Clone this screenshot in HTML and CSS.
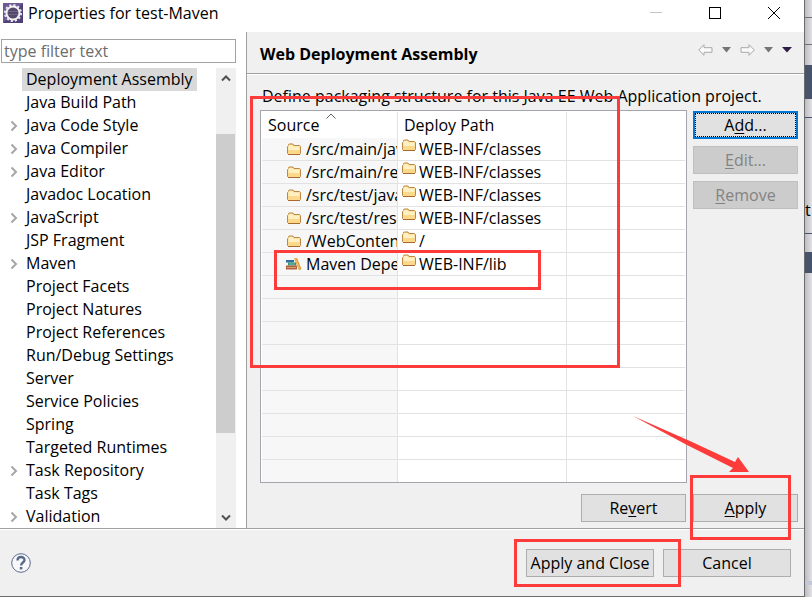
FILE: index.html
```html
<!DOCTYPE html>
<html lang="en">
<head>
    <meta charset="UTF-8">
    <meta name="viewport" content="width=device-width, initial-scale=1.0">
    <title>Properties for test-Maven</title>
    <link rel="stylesheet" href="styles.css">
</head>
<body>
    <!-- Shared icons -->
    <svg class="symbols" aria-hidden="true">
        <symbol id="folder" viewBox="0 0 14 13">
            <path d="M1.500 2.500v-1l.5-.5h4l1 1.500h5.500l1 1v7l-1 1h-11l-1-1v-7z" fill="#fbd88a" stroke="#bd8744"/>
            <path d="M2 2h3.500l1 1.500H12.500V7H1.500V3z" fill="#fff0c4"/>
            <path d="M1 11.500h12" stroke="#a86a2e"/>
        </symbol>
        <symbol id="chevron" viewBox="0 0 8 12">
            <path d="M1.500 1.500 6 6l-4.500 4.500" fill="none" stroke="#a6a6a6" stroke-width="2"/>
        </symbol>
    </svg>

    <div class="desktop">
        <main class="dialog">
            <header class="title-bar">
                <svg class="app-icon" width="20" height="20" viewBox="0 0 20 20">
                    <rect width="20" height="20" fill="#4f4079"/>
                    <path d="M0 0h20L0 20z" fill="#6b5a94"/>
                    <circle cx="10" cy="10" r="8" fill="none" stroke="#e8e6ec" stroke-width="2" stroke-dasharray="2.200 2"/>
                    <circle cx="10" cy="10" r="6.500" fill="#54496b" stroke="#f2f1f4" stroke-width="2"/>
                    <path d="M5 8.500h10M5 11.500h10" stroke="#6f6487"/>
                </svg>
                <h1 class="window-title">Properties for test-Maven</h1>
                <div class="window-controls">
                    <button type="button" aria-label="Minimize" disabled>
                        <svg width="12" height="12"><path d="M0 5.500h12" stroke="#c4c4c4"/></svg>
                    </button>
                    <button type="button" aria-label="Maximize">
                        <svg width="12" height="12"><rect x=".5" y=".5" width="11" height="11" fill="none" stroke="#000"/></svg>
                    </button>
                    <button type="button" aria-label="Close">
                        <svg width="12" height="12"><path d="m0 0 12 12M12 0 0 12" stroke="#000"/></svg>
                    </button>
                </div>
            </header>

            <div class="content">
                <nav class="sidebar">
                    <input class="filter" type="text" placeholder="type filter text" aria-label="type filter text">
                    <div class="tree-area">
                        <ul class="tree">
                            <li><span class="label selected">Deployment Assembly</span></li>
                            <li><span class="label">Java Build Path</span></li>
                            <li><svg class="arrow"><use href="#chevron"/></svg><span class="label">Java Code Style</span></li>
                            <li><svg class="arrow"><use href="#chevron"/></svg><span class="label">Java Compiler</span></li>
                            <li><svg class="arrow"><use href="#chevron"/></svg><span class="label">Java Editor</span></li>
                            <li><span class="label">Javadoc Location</span></li>
                            <li><svg class="arrow"><use href="#chevron"/></svg><span class="label">JavaScript</span></li>
                            <li><span class="label">JSP Fragment</span></li>
                            <li><svg class="arrow"><use href="#chevron"/></svg><span class="label">Maven</span></li>
                            <li><span class="label">Project Facets</span></li>
                            <li><span class="label">Project Natures</span></li>
                            <li><span class="label">Project References</span></li>
                            <li><span class="label">Run/Debug Settings</span></li>
                            <li><span class="label">Server</span></li>
                            <li><span class="label">Service Policies</span></li>
                            <li><span class="label">Spring</span></li>
                            <li><span class="label">Targeted Runtimes</span></li>
                            <li><svg class="arrow"><use href="#chevron"/></svg><span class="label">Task Repository</span></li>
                            <li><span class="label">Task Tags</span></li>
                            <li><svg class="arrow"><use href="#chevron"/></svg><span class="label">Validation</span></li>
                        </ul>
                        <div class="scrollbar">
                            <button type="button" aria-label="Scroll up">
                                <svg width="10" height="8"><path d="M1 6.500 5 2.500l4 4" fill="none" stroke="#505050" stroke-width="2"/></svg>
                            </button>
                            <div class="track"><div class="thumb"></div></div>
                            <button type="button" aria-label="Scroll down">
                                <svg width="10" height="8"><path d="m1 1.500 4 4 4-4" fill="none" stroke="#505050" stroke-width="2"/></svg>
                            </button>
                        </div>
                    </div>
                </nav>

                <section class="page">
                    <header class="page-header">
                        <h2>Web Deployment Assembly</h2>
                        <div class="history">
                            <button type="button" aria-label="Back">
                                <svg width="15" height="12"><path d="M.700 6 6 .700v3h8v4.600H6v3z" fill="#fafafa" stroke="#a8a8a8"/></svg>
                            </button>
                            <button type="button" aria-label="Back history">
                                <svg width="9" height="6"><path d="M0 0h9L4.500 5.500z" fill="#757575"/></svg>
                            </button>
                            <button type="button" aria-label="Forward">
                                <svg width="15" height="12"><path d="M14.300 6 9 .700v3H1v4.600h8v3z" fill="#fafafa" stroke="#a8a8a8"/></svg>
                            </button>
                            <button type="button" aria-label="Forward history">
                                <svg width="9" height="6"><path d="M0 0h9L4.500 5.500z" fill="#757575"/></svg>
                            </button>
                            <button type="button" aria-label="View menu">
                                <svg width="10" height="6"><path d="M0 0h10L5 5.500z" fill="#2d1c46"/></svg>
                            </button>
                        </div>
                    </header>

                    <p class="description">Define packaging structure for this Java EE Web Application project.</p>

                    <div class="assembly">
                        <div class="table-box">
                            <table>
                                <colgroup><col class="col-source"><col class="col-path"><col></colgroup>
                                <thead>
                                    <tr>
                                        <th>Source
                                            <svg class="sort" width="10" height="6"><path d="m.500 5.500 4.500-4.500 4.500 4.500" fill="none" stroke="#606060"/></svg>
                                        </th>
                                        <th>Deploy Path</th>
                                        <th></th>
                                    </tr>
                                </thead>
                                <tbody>
                                    <tr><td><span class="cell"><svg class="icon"><use href="#folder"/></svg>/src/main/java</span></td><td><span class="cell"><svg class="icon"><use href="#folder"/></svg>WEB-INF/classes</span></td><td></td></tr>
                                    <tr><td><span class="cell"><svg class="icon"><use href="#folder"/></svg>/src/main/resources</span></td><td><span class="cell"><svg class="icon"><use href="#folder"/></svg>WEB-INF/classes</span></td><td></td></tr>
                                    <tr><td><span class="cell"><svg class="icon"><use href="#folder"/></svg>/src/test/java</span></td><td><span class="cell"><svg class="icon"><use href="#folder"/></svg>WEB-INF/classes</span></td><td></td></tr>
                                    <tr><td><span class="cell"><svg class="icon"><use href="#folder"/></svg>/src/test/resources</span></td><td><span class="cell"><svg class="icon"><use href="#folder"/></svg>WEB-INF/classes</span></td><td></td></tr>
                                    <tr><td><span class="cell"><svg class="icon"><use href="#folder"/></svg>/WebContent</span></td><td><span class="cell"><svg class="icon"><use href="#folder"/></svg>/</span></td><td></td></tr>
                                    <tr>
                                        <td><span class="cell library">
                                            <svg class="icon" viewBox="0 0 16 13">
                                                <path d="M0 2h8v2.500H0z" fill="#2f719c"/>
                                                <path d="M2 4.500h8v3H2z" fill="#2f8f78"/>
                                                <path d="M3 5.500h6v1H3z" fill="#79c4a0"/>
                                                <path d="M0 7.500h11v4H0z" fill="#b0643d"/>
                                                <path d="M1 9.500h9" stroke="#d99a74"/>
                                                <path d="m8 .500 3-.500 4.500 11-2.500 1.200z" fill="#dd9a34"/>
                                                <path d="m9.500 1 4 9.500" stroke="#f3cd7c"/>
                                            </svg>Maven Dependencies</span></td>
                                        <td><span class="cell"><svg class="icon"><use href="#folder"/></svg>WEB-INF/lib</span></td>
                                        <td></td>
                                    </tr>
                                    <tr><td></td><td></td><td></td></tr>
                                    <tr><td></td><td></td><td></td></tr>
                                    <tr><td></td><td></td><td></td></tr>
                                    <tr><td></td><td></td><td></td></tr>
                                    <tr><td></td><td></td><td></td></tr>
                                    <tr><td></td><td></td><td></td></tr>
                                    <tr><td></td><td></td><td></td></tr>
                                    <tr><td></td><td></td><td></td></tr>
                                    <tr><td></td><td></td><td></td></tr>
                                </tbody>
                            </table>
                            <div class="mark mark-table"></div>
                            <div class="mark mark-maven"></div>
                        </div>
                        <div class="side-buttons">
                            <button type="button" class="btn focused">A<u>d</u>d...</button>
                            <button type="button" class="btn" disabled><u>E</u>dit...</button>
                            <button type="button" class="btn" disabled><u>R</u>emove</button>
                        </div>
                    </div>

                    <div class="page-buttons">
                        <button type="button" class="btn">Re<u>v</u>ert</button>
                        <div class="marked">
                            <button type="button" class="btn"><u>A</u>pply</button>
                            <div class="mark mark-apply"></div>
                            <svg class="pointer" width="118" height="62" viewBox="0 0 118 62">
                                <path d="M2 1 60 26.500 104 47l3-5 11 15H98l4-4L56 30z" fill="#fc3b3a"/>
                            </svg>
                        </div>
                    </div>
                </section>
            </div>

            <footer class="footer">
                <button type="button" class="help" aria-label="Help">
                    <svg width="20" height="20" viewBox="0 0 20 20">
                        <circle cx="10" cy="10" r="9.300" fill="#f8f8fa" stroke="#59698b"/>
                        <path d="M6.500 7.500C6.500 3 13.500 3 13.500 7c0 2.500-3.400 2.500-3.400 5.500" fill="none" stroke="#59698b" stroke-width="2.400"/>
                        <path d="M8.800 14h2.600v2.400H8.800z" fill="#59698b"/>
                    </svg>
                </button>
                <div class="marked">
                    <button type="button" class="btn wide">Apply and Close</button>
                    <div class="mark mark-close"></div>
                </div>
                <button type="button" class="btn wide">Cancel</button>
            </footer>
        </main>

        <!-- Editor window showing behind the dialog -->
        <aside class="behind">
            <div class="tabs"></div>
            <div class="toolbar"></div>
            <div class="gap"></div>
            <div class="bar"></div>
            <div class="gap short"></div>
            <div class="text">t</div>
            <div class="gap short"></div>
            <div class="bar low"></div>
            <div class="rest"></div>
            <div class="status"></div>
        </aside>
    </div>
</body>
</html>
```

FILE: styles.css
```css
* {
    box-sizing: border-box;
}

body {
    margin: 0;
    font-family: "Open Sans", "Noto Sans", sans-serif;
    font-size: 16px;
    line-height: 22px;
    color: #000;
    background: #e4e4e8;
}

button,
input {
    font: inherit;
    color: inherit;
}

h1,
h2,
p,
ul {
    margin: 0;
    padding: 0;
}

svg {
    display: block;
    flex: none;
}

.symbols {
    position: absolute;
    width: 0;
    height: 0;
}

.desktop {
    display: flex;
    min-height: 100vh;
    overflow: hidden;
}

.dialog {
    flex: 1;
    min-width: 0;
    display: flex;
    flex-direction: column;
    background: #f0f0f0;
    border-bottom: 1px solid #6b6b6b;
}

/* Title bar */
.title-bar {
    display: flex;
    align-items: center;
    gap: 5px;
    height: 32px;
    padding: 0 6px 6px 3px;
    background: #fff;
}

.window-title {
    flex: 1;
    font-size: 16px;
    font-weight: normal;
}

.window-controls {
    display: flex;
}

.window-controls button,
.history button,
.scrollbar button,
.help {
    display: flex;
    align-items: center;
    justify-content: center;
    padding: 0;
    border: 0;
    background: none;
}

.window-controls button {
    width: 48px;
    height: 26px;
}

.window-controls button + button {
    margin-left: 11px;
}

.content {
    flex: 1;
    display: flex;
    border-bottom: 1px solid #a0a0a0;
}

/* Left pane */
.sidebar {
    flex: none;
    display: flex;
    flex-direction: column;
    width: 247px;
    padding: 7px 10px 0 1px;
    background: #fff;
    border-right: 1px solid #a0a0a0;
}

.filter {
    width: 100%;
    height: 24px;
    padding: 0 2px;
    border: 1px solid #a3a3a3;
    background: #fff;
}

.filter::placeholder {
    color: #6d6d6d;
}

.tree-area {
    flex: 1;
    display: flex;
    margin-top: 5px;
}

.tree {
    flex: 1;
    list-style: none;
}

.tree li {
    display: flex;
    align-items: center;
    gap: 4px;
    height: 23px;
    padding-left: 9px;
    white-space: nowrap;
}

.tree li:not(:has(.arrow)) {
    padding-left: 21px;
}

.arrow {
    width: 8px;
    height: 12px;
}

.label {
    padding: 0 4px;
    line-height: 23px;
}

.label.selected {
    background: #d9d9d9;
}

.scrollbar {
    display: flex;
    flex-direction: column;
    width: 20px;
    background: #f0f0f0;
}

.scrollbar button {
    height: 20px;
}

.track {
    flex: 1;
    padding-top: 46px;
}

.thumb {
    width: 19px;
    height: 299px;
    background: #cdcdcd;
}

/* Right pane */
.page {
    flex: 1;
    min-width: 0;
    display: flex;
    flex-direction: column;
}

.page-header {
    display: flex;
    align-items: center;
    justify-content: space-between;
    height: 42px;
    padding: 3px 12px 0 13px;
    border-bottom: 1px solid #a0a0a0;
    box-shadow: 0 1px 0 #fff;
}

.page-header h2 {
    font-size: 16px;
    font-weight: bold;
}

.history {
    display: flex;
    gap: 9px;
    padding-bottom: 8px;
}

.description {
    padding: 11px 6px 3px 15px;
    white-space: nowrap;
}

.assembly {
    display: flex;
    gap: 6px;
    padding: 0 6px 0 13px;
}

.table-box {
    position: relative;
    flex: 1;
    min-width: 0;
    padding: 1px 1px 0;
    background: #fff;
    border: 1px solid #a5a5ad;
}

table {
    width: 100%;
    table-layout: fixed;
    border-collapse: separate;
    border-spacing: 0;
}

.col-source {
    width: 136px;
}

.col-path {
    width: 169px;
}

th,
td {
    height: 23px;
    padding: 0;
    border-right: 1px solid #e2e2e2;
    border-bottom: 1px solid #e2e2e2;
    overflow: hidden;
    white-space: nowrap;
}

th {
    position: relative;
    height: 26px;
    padding: 0 6px;
    border-bottom: 0;
    font-weight: normal;
    text-align: left;
}

th:last-child,
td:last-child {
    border-right: 0;
}

td:first-child {
    background: #f7f7f7;
}

tbody tr:last-child td {
    height: 22px;
    border-bottom: 0;
}

.sort {
    position: absolute;
    top: 1px;
    left: 64px;
}

.cell {
    display: flex;
    align-items: center;
    gap: 5px;
    height: 22px;
    padding-left: 25px;
}

td + td .cell {
    gap: 3px;
    padding-left: 4px;
}

.icon {
    width: 14px;
    height: 13px;
}

td + td .icon {
    align-self: flex-start;
    margin-top: 1px;
}

.cell.library {
    gap: 4px;
    padding-left: 24px;
}

.library .icon {
    width: 16px;
}

.side-buttons {
    display: flex;
    flex-direction: column;
    gap: 7px;
    padding-top: 1px;
}

/* Push buttons */
.btn {
    width: 105px;
    height: 28px;
    padding: 0;
    border: 1px solid #adadad;
    background: #e1e1e1;
    line-height: 24px;
    white-space: nowrap;
}

.btn.wide {
    width: 128px;
}

.btn:disabled {
    color: #838383;
    background: #ccc;
    border-color: #bfbfbf;
}

.btn.focused {
    border: 2px solid #0078d7;
    outline: 1px dotted #000;
    outline-offset: -3px;
}

.btn u {
    text-underline-offset: 2px;
}

.page-buttons {
    display: flex;
    justify-content: flex-end;
    gap: 7px;
    padding: 11px 6px 6px;
}

.footer {
    display: flex;
    align-items: center;
    gap: 9px;
    height: 67px;
    padding: 0 13px 0 11px;
    box-shadow: inset 0 1px 0 #fff;
}

.help {
    margin-right: auto;
}

.marked {
    position: relative;
    display: flex;
}

/* Red callouts drawn over the dialog */
.mark {
    position: absolute;
    border: 3px solid #fc3b3a;
    pointer-events: none;
}

.mark-table {
    top: -15px;
    left: -11px;
    width: 370px;
    height: 272px;
}

.mark-maven {
    top: 139px;
    left: 13px;
    width: 267px;
    height: 40px;
}

.mark-apply {
    top: -19px;
    left: -3px;
    width: 101px;
    height: 65px;
}

.mark-close {
    top: -10px;
    left: -12px;
    width: 167px;
    height: 48px;
}

.pointer {
    position: absolute;
    right: 49px;
    bottom: 45px;
    pointer-events: none;
}

/* Strip of the window behind */
.behind {
    flex: none;
    display: flex;
    flex-direction: column;
    width: 8px;
    overflow: hidden;
    border-left: 1px solid #6b6b6b;
    background: linear-gradient(to right, #bdbdc1, #e2e2e6);
}

.tabs {
    height: 18px;
    border-bottom: 1px solid #6e7078;
}

.toolbar {
    height: 27px;
    border-bottom: 1px solid #6e7078;
}

.gap {
    height: 20px;
}

.bar {
    height: 34px;
    background: #46536b;
}

.gap.short {
    height: 18px;
}

.text {
    height: 117px;
    padding-top: 81px;
    border-top: 1px solid #46536b;
    border-bottom: 1px solid #46536b;
}

.bar.low {
    height: 21px;
}

.rest {
    flex: 1;
}

.status {
    height: 16px;
    border-top: 4px solid #c3c7da;
}
```
